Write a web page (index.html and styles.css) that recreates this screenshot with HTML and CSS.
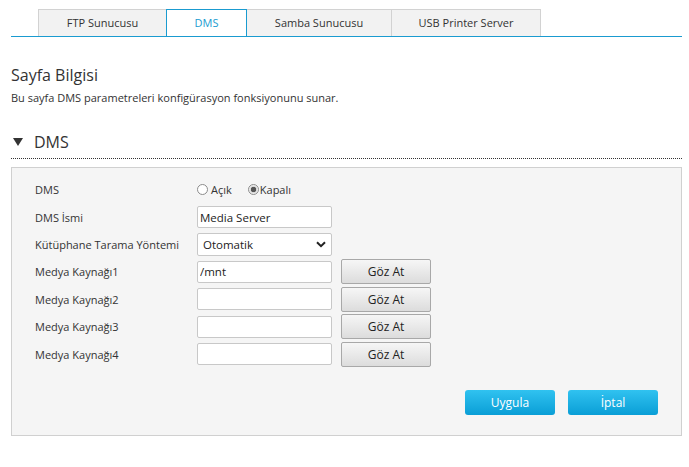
FILE: index.html
```html
<!DOCTYPE html>
<html lang="tr">
  <head>
    <meta charset="UTF-8" />
    <meta name="viewport" content="width=device-width, initial-scale=1.0" />
    <link rel="stylesheet" href="styles.css">
    <title>DMS</title>
  </head>
  <body>
    <div class="page">
      <ul class="tabs">
        <li class="tab tabFtp">FTP Sunucusu</li>
        <li class="tab tabDms active">DMS</li>
        <li class="tab tabSamba">Samba Sunucusu</li>
        <li class="tab tabUsb">USB Printer Server</li>
      </ul>

      <h2 class="pageTitle">Sayfa Bilgisi</h2>
      <p class="pageDesc">Bu sayfa DMS parametreleri konfigürasyon fonksiyonunu sunar.</p>

      <div class="sectionHead">
        <svg class="arrow" width="10" height="8" viewBox="0 0 10 8">
          <path d="M0 0 L10 0 L5 8 Z" fill="#333" />
        </svg>
        <span>DMS</span>
      </div>

      <form class="panel">
        <div class="row">
          <label>DMS</label>
          <div class="radios">
            <label class="radio"><input type="radio" name="dms" />Açık</label>
            <label class="radio"><input type="radio" name="dms" checked />Kapalı</label>
          </div>
        </div>
        <div class="row">
          <label for="dmsName">DMS İsmi</label>
          <input id="dmsName" class="text" type="text" value="Media Server" />
        </div>
        <div class="row">
          <label for="scanMode">Kütüphane Tarama Yöntemi</label>
          <div class="selectBox">
            <select id="scanMode">
              <option>Otomatik</option>
              <option>Manuel</option>
            </select>
            <svg class="chevron" width="10" height="7" viewBox="0 0 10 7">
              <path d="M1 1.2 L5 5.2 L9 1.2" fill="none" stroke="#222" stroke-width="2" />
            </svg>
          </div>
        </div>
        <div class="row">
          <label for="src1">Medya Kaynağı1</label>
          <input id="src1" class="text" type="text" value="/mnt" />
          <button type="button" class="greyBtn">Göz At</button>
        </div>
        <div class="row">
          <label for="src2">Medya Kaynağı2</label>
          <input id="src2" class="text" type="text" />
          <button type="button" class="greyBtn">Göz At</button>
        </div>
        <div class="row">
          <label for="src3">Medya Kaynağı3</label>
          <input id="src3" class="text" type="text" />
          <button type="button" class="greyBtn">Göz At</button>
        </div>
        <div class="row">
          <label for="src4">Medya Kaynağı4</label>
          <input id="src4" class="text" type="text" />
          <button type="button" class="greyBtn">Göz At</button>
        </div>

        <div class="actions">
          <button type="button" class="blueBtn">Uygula</button>
          <button type="button" class="blueBtn">İptal</button>
        </div>
      </form>
    </div>
  </body>
</html>
```

FILE: styles.css
```css
body {
  font-family: "Open Sans", "Liberation Sans", sans-serif;
  font-size: 11px;
  color: #333;
  margin: 0;
  background: #fff;
}

.page {
  width: 671px;
  margin-left: 11px;
  padding-top: 9px;
}

.tabs {
  display: flex;
  list-style: none;
  margin: 0;
  padding: 0 0 0 27px;
  border-bottom: 1px solid #1a9bd0;
}

.tab {
  height: 26px;
  line-height: 26px;
  text-align: center;
  background: #f2f2f2;
  border: 1px solid #d2d2d2;
  border-bottom: none;
  border-right: none;
}

.tabUsb {
  border-right: 1px solid #d2d2d2;
}

.tabFtp { width: 127px; }
.tabDms { width: 79px; }
.tabSamba { width: 144px; }
.tabUsb { width: 148px; }

.tab.active {
  background: #fff;
  color: #1a9bd0;
  border: 1px solid #1a9bd0;
  border-bottom: none;
}

.tab.active + .tab {
  border-left: none;
}

.pageTitle {
  font-size: 16px;
  font-weight: normal;
  margin: 27px 0 0 0;
  line-height: 22px;
}

.pageDesc {
  margin: 4px 0 0 0;
  line-height: 16px;
}

.sectionHead {
  display: flex;
  align-items: center;
  font-size: 16px;
  height: 22px;
  margin-top: 25px;
  padding-bottom: 5px;
  border-bottom: 1px dotted #333;
}

.arrow {
  margin: 0 11px 0 2px;
}

.panel {
  margin-top: 8px;
  background: #f5f5f5;
  border: 1px solid #d0d0d0;
  padding: 8px 0 20px 23px;
}

.row {
  display: flex;
  align-items: center;
  height: 27.4px;
}

.row > label {
  width: 162px;
}

.radios {
  display: flex;
  align-items: center;
}

.radio {
  display: flex;
  align-items: center;
  margin-right: 16px;
}

.radio input {
  appearance: none;
  width: 11px;
  height: 11px;
  margin: 0 3px 0 0;
  border: 1px solid #8c8c8c;
  border-radius: 50%;
  background: #fff;
}

.radio input:checked {
  margin-right: 1px;
  background: radial-gradient(circle, #555 0, #555 2.5px, #d6d6d6 3px, #fff 5px);
}

.text {
  width: 135px;
  height: 22px;
  box-sizing: border-box;
  border: 1px solid #c8c8c8;
  border-radius: 2px;
  padding: 0 2px;
  font: inherit;
  font-size: 11.5px;
  color: #222;
  background: #fff;
}

.selectBox {
  position: relative;
}

.selectBox select {
  appearance: none;
  width: 135px;
  height: 23px;
  border: 1px solid #c8c8c8;
  border-radius: 2px;
  padding: 0 5px;
  font: inherit;
  font-size: 11.5px;
  color: #222;
  background: #fff;
}

.chevron {
  position: absolute;
  right: 6px;
  top: 8px;
}

.greyBtn {
  width: 90px;
  height: 25px;
  margin-left: 9px;
  border: 1px solid #a8a8a8;
  border-radius: 2px;
  background: linear-gradient(#f6f6f6, #dcdcdc);
  font: inherit;
  font-size: 12px;
  color: #222;
}

.actions {
  display: flex;
  justify-content: flex-end;
  gap: 13px;
  margin-top: 22px;
  padding-right: 23px;
}

.blueBtn {
  width: 90px;
  height: 25px;
  border: none;
  border-radius: 3px;
  background: linear-gradient(#30c2f0, #0a9ed6);
  color: #fff;
  font: inherit;
  font-size: 12px;
}
```
